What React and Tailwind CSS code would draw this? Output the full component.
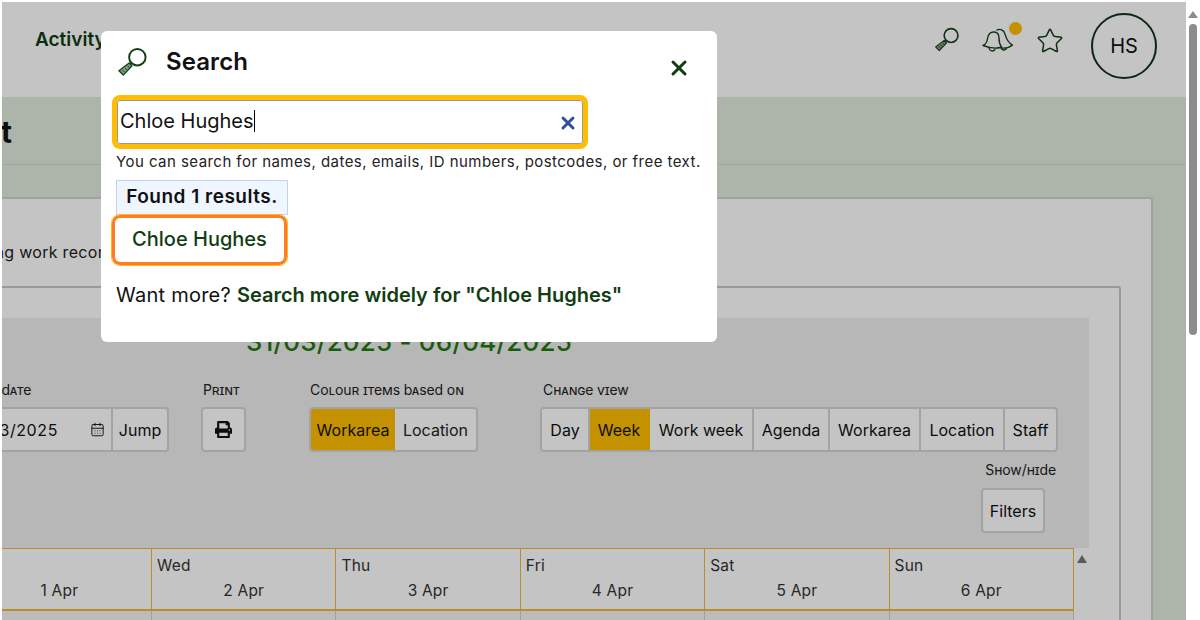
import { X, Star, CalendarDays } from "lucide-react";
import { FaPrint } from "react-icons/fa";

const views = [
  ["Day", "w-[48px]"],
  ["Week", "w-[60px]"],
  ["Work week", "w-[104px]"],
  ["Agenda", "w-[76px]"],
  ["Workarea", "w-[91px]"],
  ["Location", "w-[84px]"],
  ["Staff", "w-[51px]"],
];

const days = [
  ["Tue", "1 Apr"],
  ["Wed", "2 Apr"],
  ["Thu", "3 Apr"],
  ["Fri", "4 Apr"],
  ["Sat", "5 Apr"],
  ["Sun", "6 Apr"],
];

const Label = ({ children, className = "" }) => (
  <div className={`text-[14px] leading-[20px] tracking-[-0.1px] text-[#222] [font-variant-caps:small-caps] whitespace-nowrap ${className}`}>
    {children}
  </div>
);

const Magnifier = ({ className }) => (
  <svg viewBox="0 0 32 32" fill="none" className={className}>
    <circle cx="21" cy="10.5" r="8.5" stroke="#14401a" strokeWidth="2" />
    <path d="M15 16.5l-2 2" stroke="#14401a" strokeWidth="2" />
    <path d="M12.5 16.5l3 3-9 9.5-4.5-4.5z" fill="#7e9c82" stroke="#14401a" strokeWidth="1.4" strokeLinejoin="round" />
    <path d="M6 24l2 2M8.5 22l2 2M11 19.500l2 2" stroke="#14401a" strokeWidth="1" />
  </svg>
);

const Bells = ({ className }) => (
  <svg viewBox="0 0 32 26" fill="none" stroke="#14401a" strokeWidth="1.4" strokeLinejoin="round" strokeLinecap="round" className={className}>
    <path d="M1 18c3-1 4-3 4.500-7 .5-4 3-7 7-6.500 3 .4 4.500 3 4.500 6 0 4 1 7 2.500 9-5 2-12 1-18.500-1.500z" />
    <path d="M15 2.500c3-1.500 7 0 8 4 1 3.500 2 8 7.500 11-3 2.500-7 3.500-11 3" />
    <path d="M7 20.500c.5 3 4 4 6 1.500M19 20.500c1 2.500 4 2.500 5.500.5" />
  </svg>
);

export default function App() {
  return (
    <div className="relative flex w-[1200px] h-[620px] overflow-hidden bg-white pt-[2px] pl-[2px] font-['Inter',sans-serif] text-[#111]">
      {/* page, scrolled sideways so that its left side is cut off */}
      <div className="relative w-[1184px] h-[618px] shrink-0 overflow-hidden flex flex-col">
        <header className="h-[95px] shrink-0 flex items-start bg-white pl-[33px]">
          <span className="mt-[27px] text-[19px] leading-[22px] font-semibold text-[#123d12] whitespace-nowrap">Activity</span>
          <div className="ml-auto flex items-start pr-[29px]">
            <Magnifier className="w-[26px] h-[26px] mt-[25px]" />
            <div className="relative ml-[22px] mt-[25px]">
              <Bells className="w-[32px] h-[27px]" />
              <span className="absolute -top-[5px] right-[-8px] w-[13px] h-[13px] rounded-full bg-[#ffbd00]" />
            </div>
            <Star size={28} strokeWidth={1.3} className="ml-[22px] mt-[25px] text-[#14401a]" />
            <div className="ml-[27px] mt-[11px] w-[66px] h-[66px] rounded-full border-2 border-[#14331a] flex items-center justify-center text-[20px] text-[#111]">
              HS
            </div>
          </div>
        </header>

        <div className="flex-1 bg-[#e1ebdd] flex flex-col min-h-0">
          <div className="h-[68px] shrink-0 border-b border-[#cfd8cb] flex items-center">
            <h1 className="w-[10px] flex justify-end text-[30px] font-bold leading-none mt-[2px] whitespace-nowrap">Management</h1>
          </div>

          {/* outer card */}
          <div className="flex justify-end flex-1 pt-[32px] pr-[33px] min-h-0">
            <div className="w-[1500px] shrink-0 bg-white rounded-t-[3px] border-t-2 border-r-2 border-[#d2d2d2] flex flex-col items-end">
              <div className="self-stretch h-[87px] pt-[43px] pl-[1px] shrink-0 flex justify-start overflow-hidden">
                <p className="ml-[293px] text-[16px] leading-[20px] tracking-[0.3px] text-[#222] whitespace-nowrap">Showing work records</p>
              </div>

              {/* inner card */}
              <div className="w-[1400px] flex-1 mr-[30px] bg-white rounded-t-[3px] border-t-2 border-r-2 border-[#c8c8c8] flex flex-col items-end pt-[30px] pr-[30px]">
                <div className="w-[1360px] flex-1 bg-[#efefef] flex flex-col">
                  <h2 className="h-[48px] pt-[9px] text-center text-[26px] leading-[30px] tracking-[0.2px] font-medium text-[#1f7a12] whitespace-nowrap">
                    31/03/2025 - 06/04/2025
                  </h2>

                  <div className="flex justify-end items-start pr-[31px] pt-[14px]">
                    <div className="flex flex-col">
                      <Label className="pl-[113px]">Jump to date</Label>
                      <div className="mt-[7px] flex h-[45px] border-2 border-[#d4d4d4] rounded-[4px] bg-white text-[16px]">
                        <div className="w-[280px] flex items-center justify-end border-r-2 border-[#d4d4d4] pr-[6px]">
                          <span className="mr-[32px] tracking-[0.6px]">01/03/2025</span>
                          <CalendarDays size={15} strokeWidth={1.5} />
                        </div>
                        <div className="w-[54px] flex items-center justify-center">Jump</div>
                      </div>
                    </div>

                    <div className="ml-[32px] flex flex-col">
                      <Label className="pl-[2px]">Print</Label>
                      <div className="mt-[7px] w-[45px] h-[45px] border-2 border-[#d4d4d4] rounded-[4px] flex items-center justify-center bg-white">
                        <FaPrint size={17} />
                      </div>
                    </div>

                    <div className="ml-[63px] flex flex-col">
                      <Label className="pl-[1px]">Colour items based on</Label>
                      <div className="mt-[7px] flex h-[45px] border-2 border-[#d4d4d4] rounded-[4px] bg-white text-[16px] overflow-hidden">
                        <div className="w-[84px] bg-[#ffbd00] flex items-center justify-center">Workarea</div>
                        <div className="w-[81px] flex items-center justify-center text-[#222]">Location</div>
                      </div>
                    </div>

                    <div className="ml-[62px] flex flex-col">
                      <Label className="pl-[3px]">Change view</Label>
                      <div className="mt-[7px] flex h-[45px] border-2 border-[#d4d4d4] rounded-[4px] bg-white text-[16px] overflow-hidden">
                        {views.map(([name, width]) => (
                          <div
                            key={name}
                            className={`${width} flex items-center justify-center border-r-2 last:border-r-0 ${
                              name === "Week" ? "bg-[#ffbd00] border-[#ffbd00]" : "border-[#d4d4d4]"
                            }`}
                          >
                            {name}
                          </div>
                        ))}
                      </div>
                    </div>
                  </div>

                  <div className="flex flex-col items-end pr-[33px] pt-[8px]">
                    <Label>Show/hide</Label>
                    <div className="mt-[8px] mr-[11px] w-[64px] h-[45px] border-2 border-[#d4d4d4] rounded-[4px] bg-white flex items-center justify-center text-[16px]">
                      Filters
                    </div>
                  </div>

                  {/* calendar header */}
                  <div className="mt-[15px] flex-1 bg-white flex justify-end min-h-0">
                    <div className="flex flex-col items-end">
                      <div className="flex h-[63px] border-t border-b-2 border-[#f2b63a]">
                        {days.map(([day, date]) => (
                          <div key={day} className="w-[184.400px] border-r border-[#f2b63a] pl-[5px] pt-[7px] text-[#333] text-[15.500px] leading-[20px] tracking-[0.2px]">
                            <div>{day}</div>
                            <div className="mt-[5px] text-center pr-[5px]">{date}</div>
                          </div>
                        ))}
                      </div>
                      <div className="flex flex-1 bg-[#f5f5f5]">
                        {days.map(([day]) => (
                          <div key={day} className="w-[184.400px] border-r border-[#d0d0d0]" />
                        ))}
                      </div>
                    </div>
                    <div className="w-[15px] pt-[7px] flex justify-center">
                      <div className="w-0 h-0 border-x-[5px] border-x-transparent border-b-[8px] border-b-[#777]" />
                    </div>
                  </div>
                </div>
              </div>
            </div>
          </div>
        </div>

        {/* backdrop */}
        <div className="absolute inset-0 bg-black/[0.23]" />

        {/* search dialog */}
        <div className="absolute left-[99px] top-[29px] w-[616px] h-[311px] bg-white rounded-[6px] pl-[15px] pt-[15px]">
          <div className="flex items-center h-[32px]">
            <Magnifier className="w-[31px] h-[31px] ml-[1px]" />
            <span className="ml-[18px] text-[24px] font-semibold leading-none tracking-[0.1px]">Search</span>
          </div>
          <button className="absolute right-[26px] top-[25px] text-[#123d12]">
            <X size={24} strokeWidth={3} />
          </button>

          <div className="mt-[17px] ml-[-4px] w-[476px] h-[54px] border-[5px] border-[#ffbc00] rounded-[8px]">
            <div className="h-full border border-[#9a9a9a] rounded-[3px] flex items-center pl-[2px] pr-[4px] pb-[2px] text-[20px]">
              <span>Chloe Hughes</span>
              <span className="w-px h-[22px] bg-black" />
              <X size={20} strokeWidth={3.5} className="ml-auto mt-[3px] text-[#2f4f9a]" />
            </div>
          </div>

          <p className="mt-[3px] text-[15px] leading-[20px] tracking-[0.45px] text-[#222] whitespace-nowrap">
            You can search for names, dates, emails, ID numbers, postcodes, or free text.
          </p>

          <div className="mt-[8px] w-[172px] h-[35px] bg-[#f0f6ff] border border-[#bcd4f5] flex items-center justify-center text-[19px] tracking-[0.5px] font-semibold whitespace-nowrap">
            Found 1 results.
          </div>

          <div className="ml-[-4px] w-[175px] h-[50px] bg-white border-[3px] border-[#ff7a2f] outline outline-1 outline-[#ffbc00] rounded-[8px] flex items-center justify-center pb-[2px] text-[20px] font-medium text-[#123d12]">
            Chloe Hughes
          </div>

          <p className="mt-[18px] text-[20px] leading-[24px] whitespace-nowrap">
            <span className="tracking-[0.25px]">Want more? </span>
            <a className="font-semibold text-[#123d12]">Search more widely for "Chloe Hughes"</a>
          </p>
        </div>
      </div>

      {/* page scrollbar */}
      <div className="w-[14px] shrink-0 flex flex-col items-center pt-[9px]">
        <div className="w-0 h-0 border-x-[5px] border-x-transparent border-b-[7px] border-b-[#8c8c8c]" />
        <div className="mt-[6px] w-[8px] h-[311px] rounded-full bg-[#8c8c8c]" />
      </div>
    </div>
  );
}
